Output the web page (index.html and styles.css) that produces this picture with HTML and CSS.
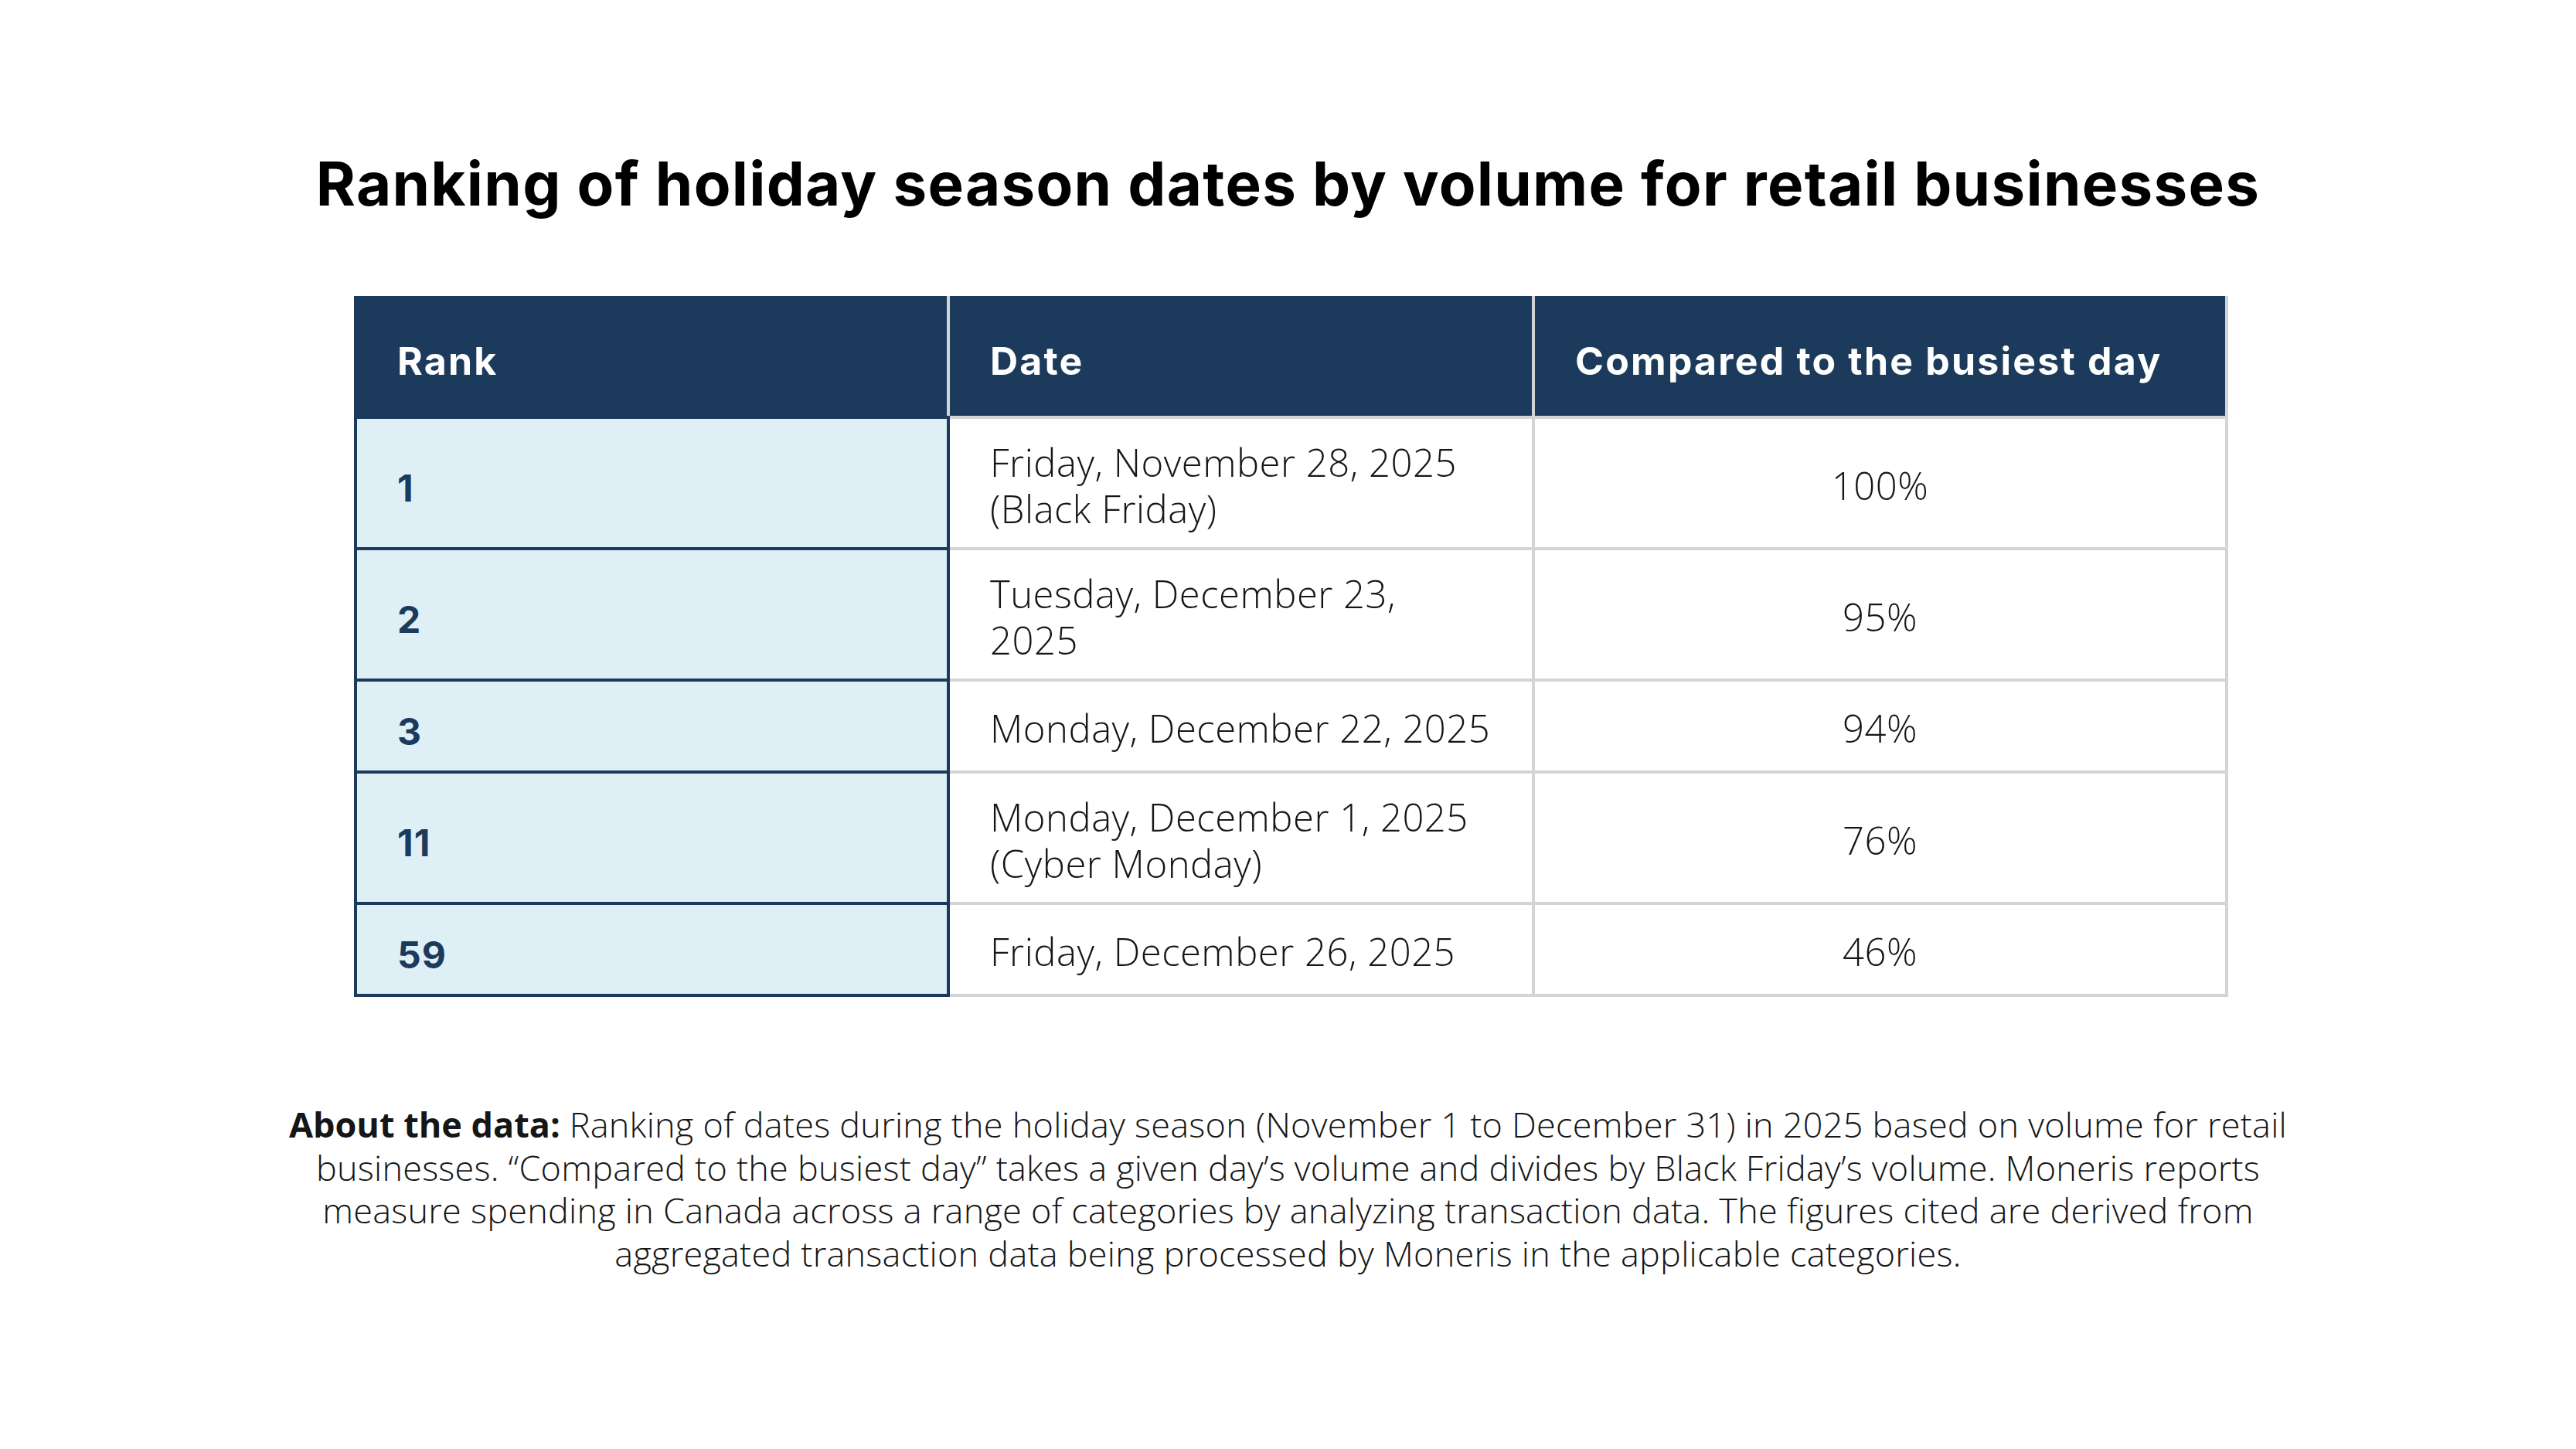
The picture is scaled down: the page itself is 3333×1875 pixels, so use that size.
FILE: index.html
```html
<!DOCTYPE html>
<html lang="en">
<head>
<meta charset="utf-8">
<title>Ranking of holiday season dates</title>
<link rel="stylesheet" href="styles.css">
</head>
<body>
<main class="page">
  <h1 class="title">Ranking of holiday season dates by volume for retail businesses</h1>
  <table class="rank-table">
    <colgroup>
      <col class="c-rank">
      <col class="c-date">
      <col class="c-cmp">
    </colgroup>
    <thead>
      <tr class="r-head">
        <th class="h-rank">Rank</th>
        <th>Date</th>
        <th class="h-last">Compared to the busiest day</th>
      </tr>
    </thead>
    <tbody>
      <tr class="r-tall">
        <td class="rank">1</td>
        <td class="date">Friday, November 28, 2025<br>(Black Friday)</td>
        <td class="pct">100%</td>
      </tr>
      <tr class="r-tall">
        <td class="rank">2</td>
        <td class="date">Tuesday, December 23,<br>2025</td>
        <td class="pct">95%</td>
      </tr>
      <tr class="r-short">
        <td class="rank">3</td>
        <td class="date">Monday, December 22, 2025</td>
        <td class="pct">94%</td>
      </tr>
      <tr class="r-tall">
        <td class="rank">11</td>
        <td class="date">Monday, December 1, 2025<br>(Cyber Monday)</td>
        <td class="pct">76%</td>
      </tr>
      <tr class="r-short">
        <td class="rank">59</td>
        <td class="date">Friday, December 26, 2025</td>
        <td class="pct">46%</td>
      </tr>
    </tbody>
  </table>
  <p class="note"><strong>About the data:</strong> Ranking of dates during the holiday season (November 1 to December 31) in 2025 based on volume for retail<br>businesses. “Compared to the busiest day” takes a given day’s volume and divides by Black Friday’s volume. Moneris reports<br>measure spending in Canada across a range of categories by analyzing transaction data. The figures cited are derived from<br>aggregated transaction data being processed by Moneris in the applicable categories.</p>
</main>
</body>
</html>
```

FILE: styles.css
```css
html, body {
  margin: 0;
  padding: 0;
  background: #ffffff;
}

.page {
  width: 3333px;
  height: 1875px;
  display: flex;
  flex-direction: column;
  align-items: center;
  padding-top: 199px;
  box-sizing: border-box;
}

.title {
  margin: 0;
  font-family: "Inter", "Open Sans", sans-serif;
  font-weight: 700;
  font-size: 78px;
  line-height: 78px;
  color: #000000;
  letter-spacing: 1.3px;
  white-space: nowrap;
}

.rank-table {
  margin: 106px 0 0 8px;
  border-collapse: collapse;
  table-layout: fixed;
  width: 2425px;
}

.c-rank { width: 767px; }
.c-date { width: 757px; }
.c-cmp { width: 897px; }

.rank-table th {
  background: #1b3a5c;
  color: #ffffff;
  text-align: left;
  font-family: "Inter", "Open Sans", sans-serif;
  font-weight: 700;
  font-size: 50px;
  letter-spacing: 2.2px;
  padding: 8px 0 0 52px;
  border-top: 4px solid #1b3a5c;
  border-left: 4px solid #d3d4d6;
  border-right: 4px solid #d3d4d6;
  border-bottom: 4px solid #d3d4d6;
  vertical-align: middle;
}

.rank-table th.h-rank {
  border-left: 4px solid #1b3a5c;
  border-bottom: 4px solid #1b3a5c;
}

.r-head { height: 155px; }
.r-tall { height: 170px; }
.r-short { height: 119px; }

.rank-table td {
  border: 4px solid #d3d4d6;
  vertical-align: middle;
  padding: 5px 0 0 52px;
  font-family: "Open Sans", "Liberation Sans", sans-serif;
  font-stretch: 100%;
  font-weight: 300;
  font-size: 49px;
  letter-spacing: 0.5px;
  line-height: 60px;
  color: #161616;
}

.rank-table td.rank {
  background: #def0f6;
  border: 4px solid #1b3a5c;
  padding-top: 14px;
  font-family: "Inter", "Open Sans", sans-serif;
  font-weight: 700;
  font-size: 48px;
  letter-spacing: 1px;
  color: #1b3a5c;
}

.rank-table td.pct {
  text-align: center;
  padding: 5px 0 0;
}

.note {
  margin: 137px 0 0;
  text-align: center;
  font-family: "Open Sans", "Liberation Sans", sans-serif;
  font-stretch: 100%;
  font-weight: 300;
  font-size: 45px;
  letter-spacing: 0.25px;
  line-height: 55.5px;
  color: #161616;
  white-space: nowrap;
}

.note strong {
  font-weight: 700;
  letter-spacing: 0;
}
```
